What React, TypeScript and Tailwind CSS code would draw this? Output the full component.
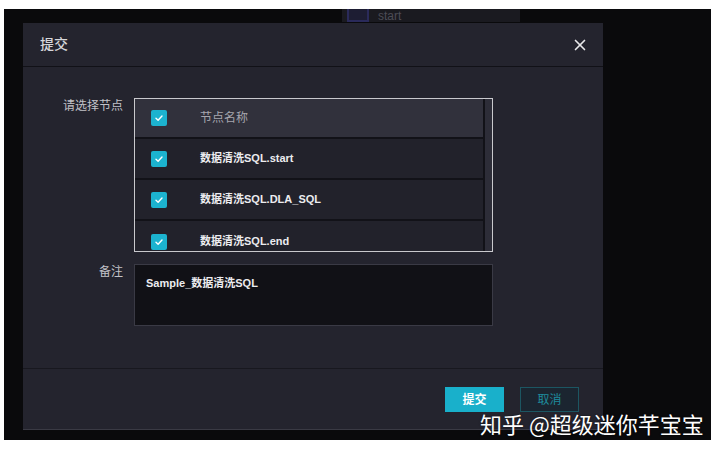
import { X } from "lucide-react"

const rows = ["数据清洗SQL.start", "数据清洗SQL.DLA_SQL", "数据清洗SQL.end"]

function CheckBox() {
  return (
    <span className="flex h-[16px] w-[16px] shrink-0 items-center justify-center rounded-[2px] bg-[#1cb3cf]">
      <svg width="10" height="10" viewBox="0 0 10 10" fill="none">
        <path d="M2 5.2 L4.1 7.2 L8 3" stroke="white" strokeWidth="1.4" strokeLinecap="round" strokeLinejoin="round" />
      </svg>
    </span>
  )
}

export default function App() {
  return (
    <div
      className="relative h-[453px] w-[719px] overflow-hidden bg-white"
      style={{ fontFamily: '"Liberation Sans", "Noto Sans CJK SC", sans-serif' }}
    >
      {/* white strip above the screenshot */}
      <div className="h-[9px]" />

      {/* dark page */}
      <div className="relative ml-[4px] h-[431px] w-[707px] bg-[#0a0a0c]">
        {/* node behind the mask */}
        <div className="absolute left-[338px] top-0 flex h-[13px] w-[178px] items-end gap-[9px] bg-[#1a1a20] pl-[5px]">
          <span className="h-[13px] w-[22px] border-x-[2px] border-b-[2px] border-[#2a2a5a] bg-[#1d1d33]" />
          <span className="mb-[-1px] text-[12px] leading-[14px] text-[#4c4c56]">start</span>
        </div>

        {/* dialog */}
        <div className="absolute left-[19px] top-[14px] flex h-[407px] w-[580px] flex-col border-b border-[#3a3a44] bg-[#24242e]">
          {/* header */}
          <div className="flex h-[44px] shrink-0 items-center justify-between border-b border-[#111117] pl-[17px] pr-[14px]">
            <span className="text-[14px] font-medium text-[#d6d6da]">提交</span>
            <X size={18} strokeWidth={2.2} className="text-[#e8e8ea]" />
          </div>

          {/* body */}
          <div className="flex flex-1 flex-col gap-[12px] pt-[31px]">
            <div className="flex gap-[11px]">
              <span className="w-[100px] pt-[1px] text-right text-[12px] leading-[14px] text-[#c2c2c8]">请选择节点</span>
              <div className="flex h-[154px] w-[359px] border border-[#c9c9cd]">
                <div className="flex flex-1 flex-col overflow-hidden">
                  <div className="flex h-[40px] shrink-0 items-center border-b-[2px] border-[#121218] bg-[#31313c] pl-[16px]">
                    <CheckBox />
                    <span className="ml-[33px] text-[12px] text-[#a6a6ae]">节点名称</span>
                  </div>
                  {rows.map((r, i) => (
                    <div
                      key={r}
                      className={
                        "flex h-[41px] shrink-0 items-center bg-[#22222b] pl-[16px] " +
                        (i < rows.length - 1 ? "border-b-[2px] border-[#121218]" : "")
                      }
                    >
                      <CheckBox />
                      <span className="ml-[33px] text-[11px] font-semibold text-[#ececef]">{r}</span>
                    </div>
                  ))}
                </div>
                <div className="w-[9px] shrink-0 border-l-[2px] border-[#121218] bg-[#2d2d38]" />
              </div>
            </div>

            <div className="flex gap-[11px]">
              <span className="w-[100px] pt-[1px] text-right text-[12px] leading-[14px] text-[#c2c2c8]">备注</span>
              <div className="h-[62px] w-[359px] border border-[#3a3a45] bg-[#111116] px-[11px] pt-[10px] text-[11px] font-semibold text-[#ececef]">
                Sample_数据清洗SQL
              </div>
            </div>
          </div>

          {/* footer */}
          <div className="flex h-[61px] shrink-0 items-center justify-end gap-[16px] border-t border-[#18181f] pr-[24px] pt-[1px]">
            <button className="h-[25px] w-[59px] bg-[#19b0cb] text-[12px] font-semibold text-white">提交</button>
            <button className="h-[25px] w-[59px] border border-[#1c5662] bg-[#1b2530] text-[12px] text-[#1e8c9e]">取消</button>
          </div>
        </div>
      </div>

      {/* watermark */}
      <div
        className="absolute left-[480px] top-[406px] text-[22px] leading-[34px] text-white"
        style={{ fontFamily: '"Noto Sans CJK SC", sans-serif', textShadow: "0 0 2px rgba(0,0,0,0.6)" }}
      >
        知乎 @超级迷你芊宝宝
      </div>
    </div>
  )
}
